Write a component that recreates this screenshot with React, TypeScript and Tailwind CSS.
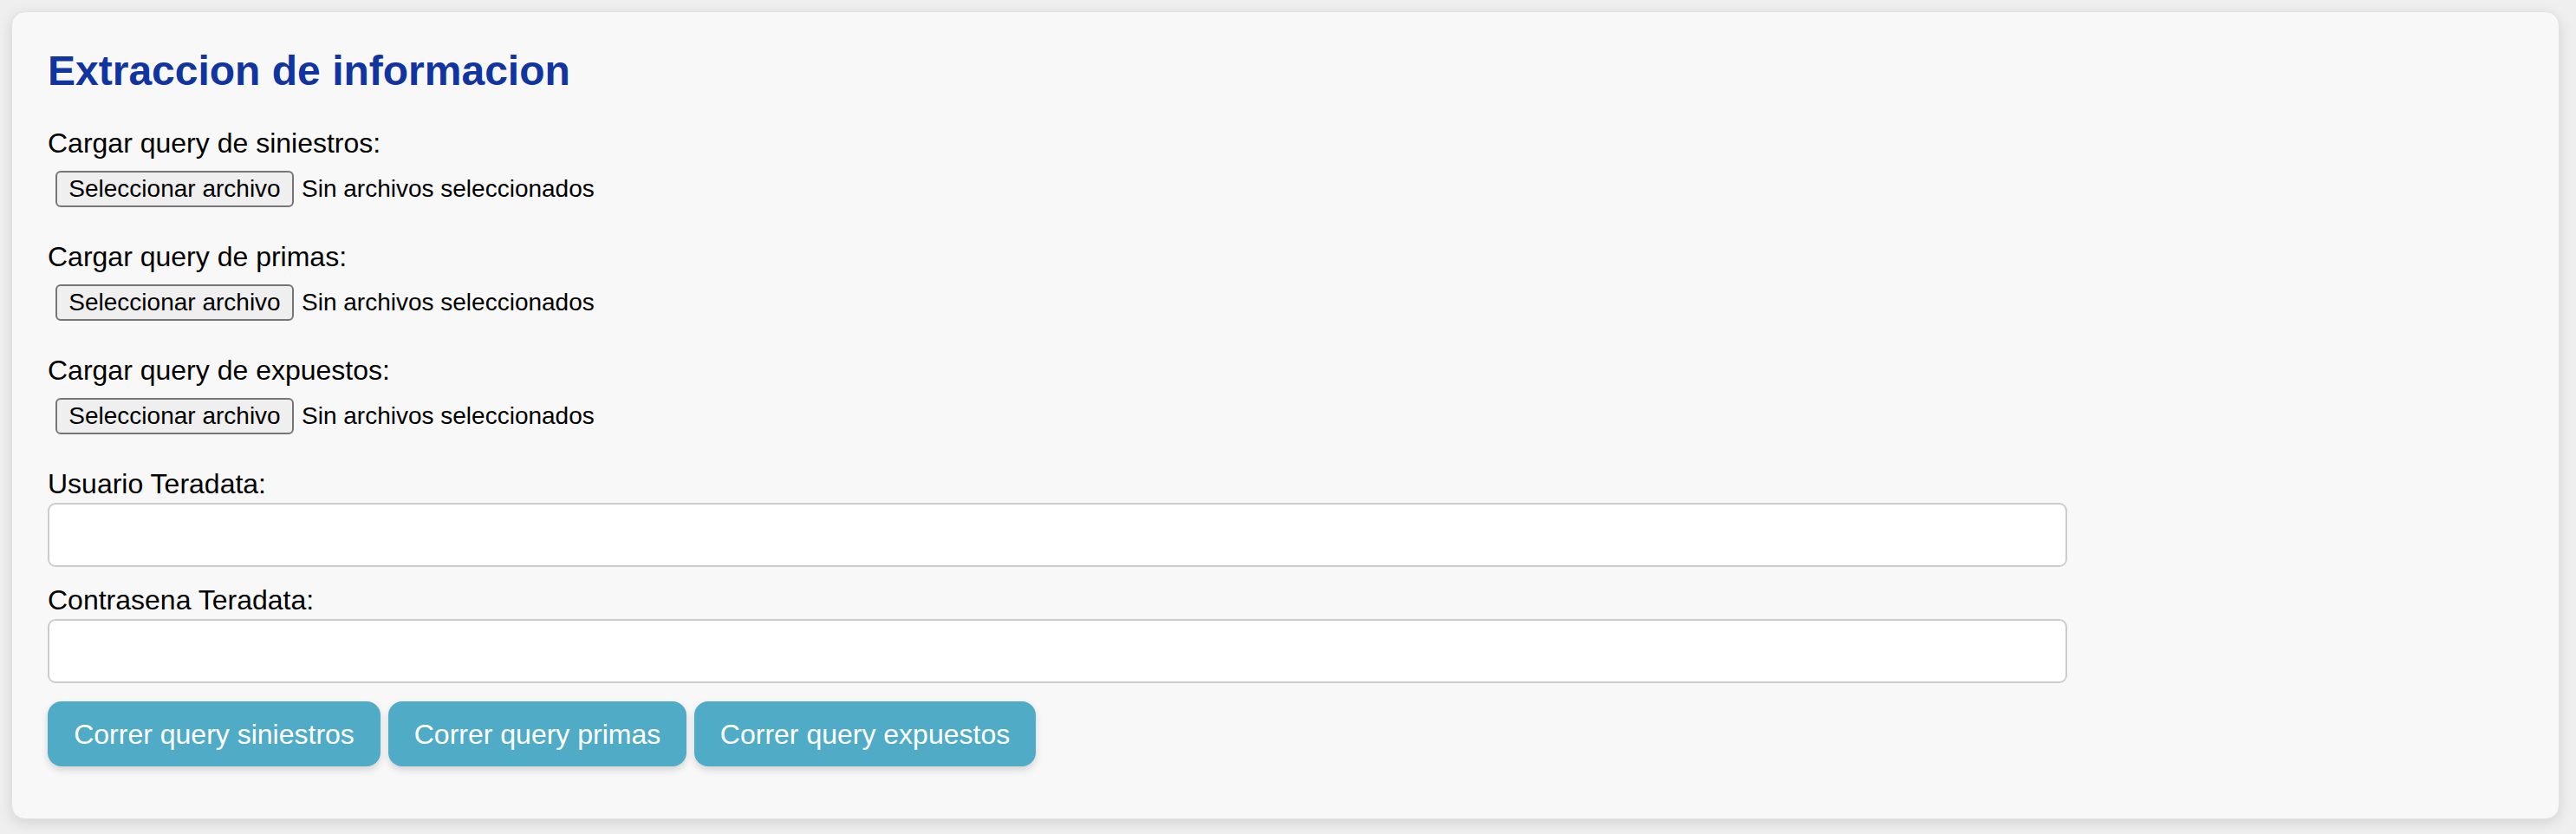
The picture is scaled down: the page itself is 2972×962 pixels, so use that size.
import React from "react";

const font = { fontFamily: '"Liberation Sans", Arial, Helvetica, sans-serif' };

function FileGroup({ label }: { label: string }) {
  return (
    <div className="mb-[39px]">
      <div className="h-[37px] text-[32px] leading-[37px] text-black">{label}</div>
      <div className="mt-[13px] flex h-[42px] items-center">
        <button
          type="button"
          className="ml-[9px] flex h-[42px] w-[275px] items-center justify-center rounded-[6px] border-2 border-[#767676] bg-[#efefef] text-[28px] leading-none text-black"
        >
          Seleccionar archivo
        </button>
        <span className="ml-[9px] text-[28px] leading-none text-black">Sin archivos seleccionados</span>
      </div>
    </div>
  );
}

function TextField({ label, type, mb }: { label: string; type: string; mb: string }) {
  return (
    <div className={mb}>
      <div className="h-[37px] text-[32px] leading-[37px] text-black">{label}</div>
      <input
        type={type}
        className="mt-[3px] block h-[74px] w-[2330px] rounded-[9px] border-2 border-[#cccccc] bg-white px-[16px] text-[32px] outline-none"
      />
    </div>
  );
}

export default function App() {
  return (
    <div className="min-h-[962px] w-[2972px] bg-[#efefef] pt-[13px] pl-[13px]" style={font}>
      <div className="h-[932px] w-[2940px] rounded-[16px] border border-[#e2e2e2] bg-[#f8f8f8] px-[41px] pt-[40px] shadow-[0_4px_16px_rgba(0,0,0,0.12)]">
        <h2 className="h-[55px] text-[48px] font-bold leading-[55px] text-[#1034a0]">Extraccion de informacion</h2>
        <div className="mt-[38px]">
          <FileGroup label="Cargar query de siniestros:" />
          <FileGroup label="Cargar query de primas:" />
          <FileGroup label="Cargar query de expuestos:" />
          <TextField label="Usuario Teradata:" type="text" mb="mb-[20px]" />
          <TextField label="Contrasena Teradata:" type="password" mb="mb-[21px]" />
          <div className="flex gap-[9px]">
            <button type="button" className="h-[75px] w-[384px] rounded-[16px] bg-[#50abc6] text-[32px] text-white shadow-[0_4px_8px_rgba(0,0,0,0.15)]">
              Correr query siniestros
            </button>
            <button type="button" className="h-[75px] w-[344px] rounded-[16px] bg-[#50abc6] text-[32px] text-white shadow-[0_4px_8px_rgba(0,0,0,0.15)]">
              Correr query primas
            </button>
            <button type="button" className="h-[75px] w-[394px] rounded-[16px] bg-[#50abc6] text-[32px] text-white shadow-[0_4px_8px_rgba(0,0,0,0.15)]">
              Correr query expuestos
            </button>
          </div>
        </div>
      </div>
    </div>
  );
}
